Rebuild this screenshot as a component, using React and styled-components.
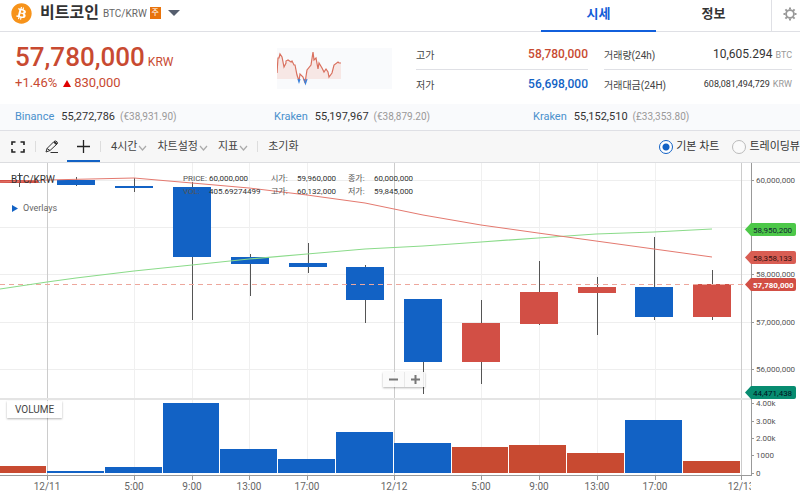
import React from "react";
import styled, { createGlobalStyle } from "styled-components";
import { FaBitcoin } from "react-icons/fa";

const FONT = `Roboto, "Noto Sans CJK KR", sans-serif`;
const BLUE = "#1262c5";
const RED = "#c84a31";
const CANDLE_RED = "#d24f45";

const GlobalStyle = createGlobalStyle`
  * { box-sizing: border-box; }
  body { margin: 0; background: #fff; color: #333; font-family: ${FONT}; overflow-x: hidden; }
  button, input { font-family: inherit; margin: 0; }
  button { padding: 0; border: 0; background: none; color: inherit; cursor: pointer; }
  a { text-decoration: none; color: inherit; }
  dl, dd, h1, p { margin: 0; }
  svg { display: block; flex: none; }
`;

const Page = styled.main`
  display: flex;
  flex-direction: column;
`;

/* ---- header ---- */
const Header = styled.header`
  display: flex;
  justify-content: space-between;
  height: 32px;
  border-bottom: 1px solid #dfe0e5;
`;
const CoinPicker = styled.button`
  display: flex;
  align-items: center;
  padding: 0 0 5px 11px;
`;
const CoinName = styled.h1`
  margin-left: 8px;
  font-size: 16px;
  line-height: 24px;
  font-weight: 700;
`;
const Pair = styled.span`
  margin: 0 3px 0 4px;
  font-size: 10px;
  color: #666;
`;
const Badge = styled.span`
  width: 11px;
  height: 12px;
  margin-right: 7px;
  font-size: 8px;
  line-height: 11px;
  text-align: center;
  color: #fff;
  background: #e8730c;
`;
const Tabs = styled.nav`
  display: flex;
`;
const Tab = styled.a`
  width: 115px;
  height: 32px;
  font-size: 13px;
  line-height: 28px;
  font-weight: 700;
  text-align: center;
  color: ${(p) => (p.$active ? "#115cd8" : "#333")};
  border-bottom: 2px solid ${(p) => (p.$active ? "#115fdc" : "transparent")};
`;
const Settings = styled.button`
  width: 29px;
  padding: 0 0 4px 11px;
  border-left: 1px solid #dfe0e5;
  overflow: hidden;
`;

/* ---- price summary ---- */
const Summary = styled.section`
  display: flex;
  align-items: flex-start;
  height: 72px;
  padding: 0 8px 0 15px;
`;
const PriceBlock = styled.div`
  width: 262px;
  padding-top: 8px;
  color: ${RED};
`;
const Price = styled.p`
  font-size: 26px;
  line-height: 34px;
  font-weight: 500;
`;
const Currency = styled.span`
  margin-left: 3px;
  font-size: 12px;
  line-height: 12px;
  font-weight: 400;
`;
const Change = styled.p`
  display: flex;
  align-items: center;
  gap: 6px;
  font-size: 13px;
  line-height: 18px;
`;
const Rise = styled.span`
  display: flex;
  align-items: center;
  gap: 3px;
`;
const Spark = styled.div`
  width: 115px;
  margin: 16px 24px 0 0;
  background: #f9fafc;
`;
const Stats = styled.dl`
  display: grid;
  flex: 1;
  grid-template-columns: 172fr 188fr;
  column-gap: 16px;
  padding-top: 7px;
`;
const Stat = styled.div`
  display: flex;
  justify-content: space-between;
  align-items: center;
  height: ${(p) => (p.$last ? 28 : 31)}px;
  border-bottom: ${(p) => (p.$last ? "0" : "1px solid #dfe0e5")};
`;
const StatName = styled.dt`
  font-size: 10px;
  color: #444;
`;
const StatValue = styled.dd`
  font-size: ${(p) => (p.$small ? 9 : 12)}px;
  font-weight: ${(p) => (p.$color ? 500 : 400)};
  color: ${(p) => p.$color || "#333"};
`;
const Unit = styled.small`
  margin-left: 3px;
  font-size: 9px;
  color: #999;
`;

/* ---- foreign exchanges ---- */
const Exchanges = styled.section`
  display: grid;
  grid-template-columns: repeat(3, 1fr);
  height: 27px;
  padding: 0 8px 0 15px;
  line-height: 25px;
  background: #f9fafc;
  border-bottom: 1px solid #dfe0e5;
`;
const Exchange = styled.div`
  font-size: 11px;
`;
const ExchangeLink = styled.a`
  margin-right: 7px;
  color: #4a90cc;
`;
const Foreign = styled.span`
  margin-left: 5px;
  font-size: 10px;
  color: #999;
`;

/* ---- toolbar ---- */
const Toolbar = styled.div`
  display: flex;
  justify-content: space-between;
  height: 32px;
  background: #f7f7f7;
  border-bottom: 1px solid #dcdde0;
  overflow: hidden;
`;
const Group = styled.div`
  display: flex;
  align-items: center;
`;
const Tool = styled.button`
  display: grid;
  place-items: center;
  width: ${(p) => p.$width}px;
  height: 31px;
  padding-top: 2px;
  border-bottom: 2px solid ${(p) => (p.$active ? BLUE : "transparent")};
`;
const Divider = styled.span`
  width: 1px;
  height: 11px;
  margin-left: ${(p) => (p.$spaced ? 9 : 0)}px;
  background: #ddd;
`;
const MenuButton = styled.button`
  display: flex;
  align-items: center;
  gap: 1px;
  margin-left: 10px;
  font-size: 11px;
  line-height: 28px;
  white-space: nowrap;
  color: #444;
`;
const RadioLabel = styled.label`
  display: flex;
  align-items: center;
  gap: 3px;
  margin-left: 13px;
  font-size: 11px;
  line-height: 28px;
  white-space: nowrap;
`;
const Radio = styled.input`
  appearance: none;
  width: 14px;
  height: 14px;
  border: 1px solid #bbb;
  border-radius: 50%;
  background: #fafafa;
  &:checked {
    border-color: ${BLUE};
    background: radial-gradient(${BLUE} 3px, #fff 4px);
  }
`;

/* ---- chart ---- */
const ChartArea = styled.section`
  position: relative;
`;
const ChartSvg = styled.svg`
  width: 100%;
  font-family: ${FONT};
`;
const ChartTitle = styled.div`
  position: absolute;
  top: 9px;
  left: 11px;
  font-size: 10px;
  line-height: 16px;
`;
const Overlays = styled.button`
  position: absolute;
  top: 37px;
  left: 12px;
  display: flex;
  align-items: center;
  gap: 5px;
  font-size: 9px;
  line-height: 16px;
  color: #666;
`;
const Legend = styled.dl`
  position: absolute;
  top: 9px;
  left: 183px;
  display: grid;
  grid-template-columns: 26px 62px 26px 51px 26px 50px;
  font-size: 8px;
  line-height: 13px;
  white-space: nowrap;
`;
const LegendName = styled.dt`
  color: #555;
`;
const LegendValue = styled.dd`
  color: #333;
`;
const VolumeTag = styled.div`
  position: absolute;
  top: 71%;
  left: 7px;
  padding: 0 8px;
  font-size: 10px;
  line-height: 17px;
  color: #444;
  background: rgba(255, 255, 255, 0.7);
  box-shadow: 0 1px 2px rgba(0, 0, 0, 0.3);
`;
const ZoomBox = styled.div`
  position: absolute;
  top: 62.5%;
  left: 383px;
  display: flex;
  background: rgba(250, 250, 250, 0.9);
  box-shadow: 0 1px 2px rgba(0, 0, 0, 0.3);
`;
const ZoomButton = styled.button`
  display: grid;
  place-items: center;
  width: 21px;
  height: 15px;
  & + & { border-left: 1px solid #e8e8e8; }
`;

/* rising, body top, body bottom, wick top, wick bottom, volume top */
const CANDLES = [
  [1, 18, 21, 11, 25, 304],
  [0, 18, 23, 15, 24, 309],
  [0, 24, 26, 16, 30, 305],
  [0, 25, 95, 20, 158, 241],
  [0, 95, 102, 92, 134, 287],
  [0, 101, 105, 81, 111, 297],
  [0, 105, 138, 103, 161, 270],
  [0, 137, 200, 137, 232, 281],
  [1, 161, 200, 138, 222, 285],
  [1, 130, 162, 99, 163, 283],
  [1, 125, 131, 115, 173, 291],
  [0, 125, 155, 75, 158, 258],
  [1, 122, 155, 108, 158, 299],
];
const TIMES = [
  [47, "12/11", 1], [134, "5:00"], [192, "9:00"], [249, "13:00"], [307, "17:00"],
  [394, "12/12", 1], [481, "5:00"], [539, "9:00"], [597, "13:00"], [655, "17:00"], [741, "12/13", 1],
];
const PRICES = [[18, "60,000,000"], [65, ""], [112, "58,000,000"], [160, "57,000,000"], [207, "56,000,000"]];
const VOLUMES = [[241, "4.00k"], [259, "3.00k"], [276, "2.00k"], [293, "1000"], [311, "0"]];
const FLAGS = [
  [67, "58,950,200", "#4dc849", "#123"],
  [95, "58,358,133", "#d95d53", "#311"],
  [122, "57,780,000", "#d24f45", "#fff"],
  [230, "44,471,438", "#078c70", "#012"],
];
const center = (i) => Math.round(18.5 + i * 57.8);
const edge = (i) => Math.round(47 + (i - 1) * 57.8);

function Chart() {
  return (
    <ChartSvg viewBox="0 1 800 335" role="img" aria-label="BTC/KRW">
      <clipPath id="plot"><rect width="751" height="336" /></clipPath>
      <g shapeRendering="crispEdges">
        {PRICES.map(([y]) => <path key={y} d={`M0 ${y}.5H751`} stroke="#eee" />)}
        {TIMES.map(([x, , day]) => (
          <path key={x} d={`M${x}.5 0V313`} stroke={day ? "#ccc" : "#f0f0f0"} />
        ))}
        <path d="M0 237H751" stroke="#e4e4e4" strokeWidth="2" />
        {CANDLES.map(([up, top, bottom, high, low, volume], i) => (
          <g key={i}>
            <path d={`M${center(i)}.5 ${high}V${low}`} stroke="#555" />
            <rect x={center(i) - 19} y={top} width="38" height={bottom - top} fill={up ? CANDLE_RED : BLUE} />
            <rect x={edge(i)} y={volume} width={edge(i + 1) - edge(i) - 1} height={311 - volume} fill={up ? RED : BLUE} />
          </g>
        ))}
        <path d="M0 313.500H751.500M751.500 0V314" fill="none" stroke="#999" />
        {TIMES.map(([x]) => <path key={x} d={`M${x}.5 314v4`} stroke="#999" />)}
        <path d="M0 122.500H745" stroke="#eda79c" strokeDasharray="5 4" />
      </g>
      <path d="M0 127L47 120L76 116L134 109L192 103L249 97L307 92L365 87L423 84L481 80L538 76L596 72L654 70L712 67" fill="none" stroke="#8bdb8a" strokeWidth="1.200" />
      <path d="M0 20L47 18L90 17L134 16L192 21L249 26L307 33L365 41L423 53L481 63L538 71L596 79L654 87L712 95" fill="none" stroke="#e4796f" />
      <g clipPath="url(#plot)" fontSize="10" fill="#666" textAnchor="middle">
        {TIMES.map(([x, label]) => <text key={x} x={x} y="328">{label}</text>)}
      </g>
      <g fontSize="8" fill="#555">
        {[...PRICES, ...VOLUMES].map(([y, label]) => label && (
          <g key={label}>
            <path d={`M751 ${y}.5h3`} stroke="#999" />
            <text x="756" y={y + 3}>{label}</text>
          </g>
        ))}
        {FLAGS.map(([y, label, fill, color]) => (
          <g key={label}>
            <path d={`M745 ${y}.5L751 ${y - 6}H794Q796 ${y - 6} 796 ${y - 4}V${y + 5}Q796 ${y + 7} 794 ${y + 7}H751Z`} fill={fill} />
            <text x="753" y={y + 4} fill={color} fontWeight={color === "#fff" ? 700 : 400}>{label}</text>
          </g>
        ))}
      </g>
    </ChartSvg>
  );
}

const Chevron = () => (
  <svg width="9" height="9" viewBox="0 0 9 9" fill="none" stroke="#aaa" strokeWidth="1.200">
    <path d="M1 4l3.500 4L8 4" />
  </svg>
);

export default function App() {
  return (
    <Page>
      <GlobalStyle />
      <Header>
        <CoinPicker>
          <FaBitcoin size={21} color="#f7931a" />
          <CoinName>비트코인</CoinName>
          <Pair>BTC/KRW</Pair>
          <Badge>주</Badge>
          <svg width="12" height="6" viewBox="0 0 12 6"><path d="M0 0H12L6 6Z" fill="#555e6e" /></svg>
        </CoinPicker>
        <Tabs>
          <Tab href="#price" $active>시세</Tab>
          <Tab href="#info">정보</Tab>
          <Settings aria-label="설정">
            <svg width="14" height="14" viewBox="0 0 14 14" fill="none" stroke="#999">
              <circle cx="7" cy="7" r="3.900" strokeWidth="1.800" />
              <path d="M7 .5v2M7 11.500v2M.5 7h2M11.500 7h2M2.400 2.400l1.500 1.500M10.100 10.100l1.500 1.500M2.400 11.600l1.500-1.500M10.100 3.900l1.500-1.500" strokeWidth="2" />
            </svg>
          </Settings>
        </Tabs>
      </Header>

      <Summary>
        <PriceBlock>
          <Price>57,780,000<Currency>KRW</Currency></Price>
          <Change>
            +1.46%
            <Rise>
              <svg width="8" height="7" viewBox="0 0 8 7"><path d="M4 0L8 7H0Z" fill="#e00000" /></svg>
              830,000
            </Rise>
          </Change>
        </PriceBlock>
        <Spark>
          <svg width="115" height="41" viewBox="0 0 115 41">
            <path d="M0 31V25L1 10L3 6L5 9L7 19L9 15L11 12L14 14L17 17L20 27L21 31H29L30 22L34 17L36 4L37 12L39 10L41 21L42 15L45 20L47 24L49 21L51 24L52 29L55 25L57 17L61 14L64 15V31Z" fill="#f7e7e5" />
            <path d="M0 25L1 10L2 10L3 6L5 9L7 19L9 15L9 13L11 12L14 14L15 13L17 17L18 17L20 27L22 33L23 26L26 29L28 35L30 22L34 17L36 4L37 12L39 10L41 21L42 15L45 20L47 24L49 21L51 24L52 29L55 25L57 17L61 14L62 15L64 15" fill="none" stroke="#d9705e" strokeWidth="1.200" />
            <path d="M21 31L22 34L23 31M27 31L28.500 35.500L30 31" fill="none" stroke="#3a82dc" strokeWidth="1.200" />
          </svg>
        </Spark>
        <Stats>
          <Stat><StatName>고가</StatName><StatValue $color={RED}>58,780,000</StatValue></Stat>
          <Stat><StatName>거래량(24h)</StatName><StatValue>10,605.294<Unit>BTC</Unit></StatValue></Stat>
          <Stat $last><StatName>저가</StatName><StatValue $color={BLUE}>56,698,000</StatValue></Stat>
          <Stat $last><StatName>거래대금(24H)</StatName><StatValue $small>608,081,494,729<Unit>KRW</Unit></StatValue></Stat>
        </Stats>
      </Summary>

      <Exchanges>
        <Exchange><ExchangeLink href="#binance">Binance</ExchangeLink>55,272,786<Foreign>(€38,931.90)</Foreign></Exchange>
        <Exchange><ExchangeLink href="#kraken-eur">Kraken</ExchangeLink>55,197,967<Foreign>(€38,879.20)</Foreign></Exchange>
        <Exchange><ExchangeLink href="#kraken-gbp">Kraken</ExchangeLink>55,152,510<Foreign>(£33,353.80)</Foreign></Exchange>
      </Exchanges>

      <Toolbar>
        <Group>
          <Tool $width={35} aria-label="전체화면">
            <svg width="14" height="12" viewBox="0 0 14 12" fill="none" stroke="#222" strokeWidth="1.600">
              <path d="M1 4V1H4.500M9.500 1H13V4M13 8V11H9.500M4.500 11H1V8" />
            </svg>
          </Tool>
          <Divider />
          <Tool $width={31} aria-label="그리기">
            <svg width="14" height="13" viewBox="0 0 14 13" fill="none" stroke="#333">
              <path d="M1 12L2 8.500L9 1.500Q10.500 .3 12 1.800Q13 3 12 4L5 10.500L1 12M2 8.500L5 10.500M5.500 12.500H13" />
              <path d="M9 1.800L11.800 4.200" strokeWidth="2" />
            </svg>
          </Tool>
          <Tool $width={33} $active aria-label="십자선">
            <svg width="13" height="13" viewBox="0 0 13 13" stroke="#222" strokeWidth="1.300"><path d="M6.500 0V13M0 6.500H13" /></svg>
          </Tool>
          <Divider />
          <MenuButton>4시간<Chevron /></MenuButton>
          <MenuButton>차트설정<Chevron /></MenuButton>
          <MenuButton>지표<Chevron /></MenuButton>
          <Divider $spaced />
          <MenuButton>초기화</MenuButton>
        </Group>
        <Group>
          <RadioLabel><Radio type="radio" name="chart" defaultChecked />기본 차트</RadioLabel>
          <RadioLabel><Radio type="radio" name="chart" />트레이딩뷰</RadioLabel>
        </Group>
      </Toolbar>

      <ChartArea>
        <Chart />
        <ChartTitle>BTC/KRW</ChartTitle>
        <Overlays>
          <svg width="6" height="7" viewBox="0 0 6 7"><path d="M0 0L6 3.500L0 7Z" fill={BLUE} /></svg>
          Overlays
        </Overlays>
        <Legend>
          <LegendName>PRICE:</LegendName><LegendValue>60,000,000</LegendValue>
          <LegendName>시가:</LegendName><LegendValue>59,960,000</LegendValue>
          <LegendName>종가:</LegendName><LegendValue>60,000,000</LegendValue>
          <LegendName>VOL:</LegendName><LegendValue>405.69274499</LegendValue>
          <LegendName>고가:</LegendName><LegendValue>60,132,000</LegendValue>
          <LegendName>저가:</LegendName><LegendValue>59,845,000</LegendValue>
        </Legend>
        <VolumeTag>VOLUME</VolumeTag>
        <ZoomBox>
          <ZoomButton aria-label="축소">
            <svg width="9" height="9" viewBox="0 0 9 9" stroke="#777" strokeWidth="2"><path d="M0 4.500H9" /></svg>
          </ZoomButton>
          <ZoomButton aria-label="확대">
            <svg width="9" height="9" viewBox="0 0 9 9" stroke="#777" strokeWidth="2"><path d="M0 4.500H9M4.500 0V9" /></svg>
          </ZoomButton>
        </ZoomBox>
      </ChartArea>
    </Page>
  );
}
